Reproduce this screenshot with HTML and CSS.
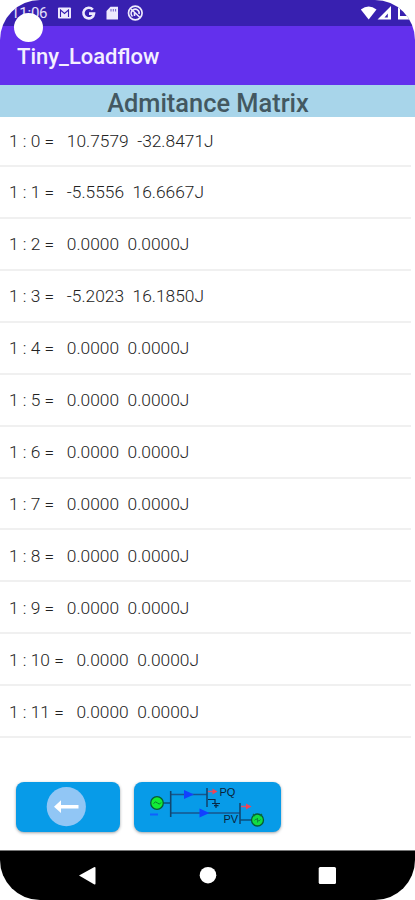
FILE: index.html
```html
<!DOCTYPE html>
<html lang="en">
<head>
<meta charset="utf-8">
<title>Tiny_Loadflow</title>
<link rel="stylesheet" href="styles.css">
</head>
<body>
<div class="screen">
  <div class="status">
    <span class="clock">11:06</span>
    <svg class="notices" width="88" height="16" viewBox="0 0 88 16" fill="none" stroke="#eeeafd">
      <rect x="1" y="2.5" width="13" height="11" rx="1" fill="#eeeafd" stroke="none"/>
      <path d="M3.5 12V5L7.500 8.500L11.500 5V12" stroke="#3820b0" stroke-width="1.1"/>
      <path d="M35.800 4.700A5.300 5.300 0 1 0 37 8.600H32" stroke-width="2.6"/>
      <path d="M53.500 1.800H61V14.600H49.500V6Z" fill="#eeeafd" stroke="none"/>
      <path d="M54 4V6.500M56.300 4V6.500M58.600 4V6.500" stroke="#3820b0" stroke-width=".7"/>
      <circle cx="78.300" cy="8" r="6.800" stroke-width="1.7"/>
      <path d="M75.500 11.500A4 4 0 0 1 76 5A3.800 3.800 0 0 1 82 9M74 4L83 12.500M77.500 11V8" stroke-width="1.6"/>
    </svg>
    <svg class="signals" width="55" height="16" viewBox="0 0 55 16" fill="#fff">
      <path d="M0.8 4.500Q8.700-1.500 16.500 4.500L8.700 14.500Z"/>
      <path fill-rule="evenodd" d="M17.500 14.500L31 1V14.500ZM24.500 12.500H27.800V8.500Z"/>
      <path d="M38 1H40V11H55V14.500H38Z"/>
    </svg>
  </div>
  <div class="camera"></div>
  <header class="appbar"><h1>Tiny_Loadflow</h1></header>
  <h2 class="heading">Admitance Matrix</h2>
  <ul class="matrix">
    <li>1 : 0 =   10.7579  -32.8471J</li>
    <li>1 : 1 =   -5.5556  16.6667J</li>
    <li>1 : 2 =   0.0000  0.0000J</li>
    <li>1 : 3 =   -5.2023  16.1850J</li>
    <li>1 : 4 =   0.0000  0.0000J</li>
    <li>1 : 5 =   0.0000  0.0000J</li>
    <li>1 : 6 =   0.0000  0.0000J</li>
    <li>1 : 7 =   0.0000  0.0000J</li>
    <li>1 : 8 =   0.0000  0.0000J</li>
    <li>1 : 9 =   0.0000  0.0000J</li>
    <li>1 : 10 =   0.0000  0.0000J</li>
    <li>1 : 11 =   0.0000  0.0000J</li>
  </ul>
  <div class="actions">
    <button class="btn back" aria-label="Back">
      <svg width="104" height="50" viewBox="0 0 104 50">
        <circle cx="50.3" cy="24.7" r="19.6" fill="#91c6f5"/>
        <path d="M38 24.700L45 18.300V23H62.500V26.500H45V31.100Z" fill="#fff"/>
      </svg>
    </button>
    <button class="btn network" aria-label="Network">
      <svg width="147" height="50" viewBox="0 0 147 50" fill="none">
        <path d="M29 21H36M74 17.500H81V21M78 21.500H86M80 23.700H84.500M82 22V26M106 38H117" stroke="#082b48" stroke-width="1.2"/>
        <path d="M37 12.500H73M37 31H106" stroke="#17568c" stroke-width="1.3"/>
        <path d="M36.700 9V35M73 6V25M106 21V42" stroke="#12466f" stroke-width="1.6"/>
        <path d="M50 8L60 12.500L50 17ZM65.500 26.500L75.500 31L65.500 35.500Z" fill="#1240ff"/>
        <path d="M16 32.500H24" stroke="#1060ff" stroke-width="2"/>
        <path d="M74 9.500H80M107 24.500H114" stroke="#d5526c" stroke-width="1.4"/>
        <path d="M78.500 6.500L83.500 9.500L78.500 12.500ZM112 21.500L117.500 24.500L112 27.500Z" fill="#f04455"/>
        <circle cx="23" cy="21" r="6.300" fill="#12ec35" stroke="#075c36" stroke-width="1.300"/>
        <path d="M19.500 21.500Q21.500 18.500 23.500 21T27 20.500" stroke="#087c30"/>
        <circle cx="123.500" cy="38" r="6" fill="#12dc42" stroke="#075c36" stroke-width="1.300"/>
        <path d="M119 32L121 34M128 32L126 34" stroke="#087040" stroke-width="1.300"/>
        <path d="M120.500 38.500Q122 35.500 123.500 38T126.500 37.500M123.500 36V40.500" stroke="#0b8a40"/>
        <text x="85.500" y="13.500">PQ</text>
        <text x="89.500" y="41">PV</text>
      </svg>
    </button>
  </div>
  <nav class="navbar">
    <svg width="415" height="49" viewBox="0 0 415 49" fill="#fff">
      <path d="M79 24.500L94 16.200Q95.500 15.500 95.500 17V32.500Q95.500 34 94 33.200Z"/>
      <circle cx="208" cy="24.200" r="8.300"/>
      <rect x="318.700" y="16" width="17.300" height="17" rx="1.500"/>
    </svg>
  </nav>
</div>
</body>
</html>
```
FILE: styles.css
```css
* { box-sizing: border-box; }
body { margin: 0; background: #fff; font-family: Roboto, sans-serif; }
.screen {
  position: relative;
  display: flex;
  flex-direction: column;
  width: 415px;
  height: 900px;
  overflow: hidden;
  background: #fff;
  border-radius: 40px;
}
.status {
  display: flex;
  align-items: center;
  height: 26px;
  padding: 0 0 0 11px;
  background: #3820b0;
}
.clock { width: 46px; color: #e6e0fa; font-size: 15px; letter-spacing: -.2px; }
.notices { flex: none; }
.signals { flex: none; margin-left: auto; }
.camera {
  position: absolute;
  left: 14px;
  top: 13px;
  width: 29px;
  height: 29px;
  border-radius: 50%;
  background: #fff;
}
.appbar {
  display: flex;
  align-items: center;
  height: 59px;
  padding: 2px 17px 0;
  background: #6330ed;
}
h1 { margin: 0; color: #f4efff; font-size: 22px; font-weight: 500; line-height: 28px; }
.heading {
  height: 32px;
  margin: 0;
  padding: 3px 0 0 1px;
  background: #a8d5ea;
  color: #435861;
  font-size: 25.400px;
  font-weight: 500;
  line-height: 31px;
  text-align: center;
}
.matrix { width: 411px; margin: 0; padding: 0; list-style: none; }
.matrix li {
  display: flex;
  align-items: center;
  height: 51.930px;
  padding: 1px 0 0 9px;
  border-bottom: 2px solid #f0f0f0;
  color: #222;
  font-size: 17.350px;
  font-weight: 300;
  white-space: pre;
}
.matrix li:first-child { height: 50px; padding-top: 0; }
.actions { display: flex; gap: 14px; padding: 43.700px 16px 0; }
.btn {
  height: 50px;
  padding: 0;
  border: 0;
  border-radius: 8px;
  background: #079be8;
  box-shadow: 0 1px 3px rgba(40, 50, 60, .45);
}
.btn svg { display: block; }
.back { width: 104px; }
.network { width: 147px; }
.network text { fill: #0a2238; font: 11px "Liberation Sans", sans-serif; }
.navbar { height: 50px; margin-top: auto; border-top: 1px solid #777; background: #000; }
.navbar svg { display: block; }
```
